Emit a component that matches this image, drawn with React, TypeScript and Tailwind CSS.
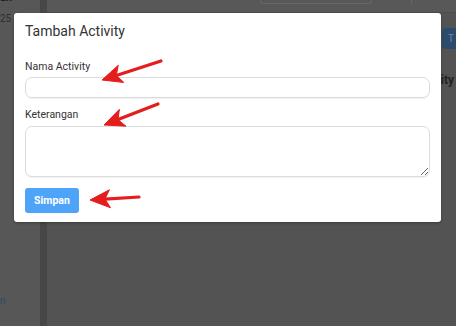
import * as React from "react";

type Pt = [number, number];

// red annotation arrow, tip = where it points
function Arrow({ from, to }: { from: Pt; to: Pt }) {
  const dx = to[0] - from[0];
  const dy = to[1] - from[1];
  const len = Math.hypot(dx, dy);
  const ux = dx / len;
  const uy = dy / len;
  const nx = -uy;
  const ny = ux;
  const head = 20;
  const half = 9;
  const bx = to[0] - ux * head;
  const by = to[1] - uy * head;
  const notch: Pt = [to[0] - ux * (head - 5), to[1] - uy * (head - 5)];
  const pts = [
    to,
    [bx + nx * half, by + ny * half],
    notch,
    [bx - nx * half, by - ny * half],
  ]
    .map((p) => p.join(","))
    .join(" ");
  return (
    <g fill="#e41d1d" stroke="#e41d1d">
      <line
        x1={from[0]}
        y1={from[1]}
        x2={notch[0]}
        y2={notch[1]}
        strokeWidth="3.2"
        strokeLinecap="round"
      />
      <polygon points={pts} strokeWidth="1" strokeLinejoin="round" />
    </g>
  );
}

export default function App() {
  return (
    <div
      className="relative h-[326px] w-[456px] overflow-hidden bg-[#535353]"
      style={{ fontFamily: "Roboto, 'Liberation Sans', sans-serif" }}
    >
      {/* Halaman di belakang overlay */}
      <div className="flex h-full">
        <aside className="relative w-[40px] shrink-0 bg-[#575757]">
          <div className="mt-[-8px] h-[12px] text-[11px] font-bold leading-[11px] text-[#1e1e1e]">
            an
          </div>
          <div className="pt-[9px] text-[10px] leading-[11px] text-[#2e2e2e]">
            25
          </div>
          <div className="absolute bottom-[20px] left-0 text-[10px] leading-[10px] text-[#2c4a66]">
            n
          </div>
        </aside>
        <div className="w-[7px] shrink-0 bg-[#474747]" />
        <main className="flex flex-1 flex-col">
          <div className="flex h-[13px] items-start border-b border-[#4c4c4c] bg-[#585858]">
            <div className="ml-[213px] h-[4px] w-[112px] rounded-b-[3px] border border-t-0 border-[#666]" />
            <div className="h-[4px] w-[40px] border-r border-[#666]" />
          </div>
          <div className="flex justify-end pt-[15px]">
            <div className="flex h-[21px] w-[14px] items-center rounded-l-[4px] bg-[#2b4b6d] pl-[6px] text-[10px] text-[#6c85a0]">
              T
            </div>
          </div>
          <div className="flex justify-end pt-[25px] pr-[2px] text-[12px] font-bold leading-[12px] text-[#222]">
            ity
          </div>
        </main>
      </div>

      {/* Modal */}
      <div className="absolute left-[14px] top-[13px] flex h-[209px] w-[427px] flex-col rounded-[3px] bg-white px-[11px] pt-[8px] shadow-[0_1px_3px_rgba(0,0,0,0.3)]">
        <h2 className="text-[14px] leading-[20px] text-[#333]">Tambah Activity</h2>
        <label className="mt-[19px] text-[10.5px] leading-[13px] text-[#333]">
          Nama Activity
        </label>
        <input
          type="text"
          className="mt-[4px] h-[21px] w-[405px] rounded-[7px] border border-[#dcdcdc] shadow-[0_1px_1px_rgba(0,0,0,0.06)] outline-none"
        />
        <label className="mt-[10px] text-[10.5px] leading-[13px] text-[#333]">
          Keterangan
        </label>
        <textarea className="mt-[5px] h-[51px] w-[405px] rounded-[7px] border border-[#dcdcdc] shadow-[0_1px_1px_rgba(0,0,0,0.06)] outline-none" />
        <div className="mt-[10px]">
          <button className="h-[25px] w-[54px] rounded-[3px] bg-[#4ea4f8] text-[10.5px] font-bold text-white">
            Simpan
          </button>
        </div>
      </div>

      <svg
        className="pointer-events-none absolute inset-0"
        width="456"
        height="326"
        viewBox="0 0 456 326"
      >
        <Arrow from={[161, 61]} to={[102, 80]} />
        <Arrow from={[158, 104]} to={[104, 125]} />
        <Arrow from={[139, 197]} to={[90, 200]} />
      </svg>
    </div>
  );
}
